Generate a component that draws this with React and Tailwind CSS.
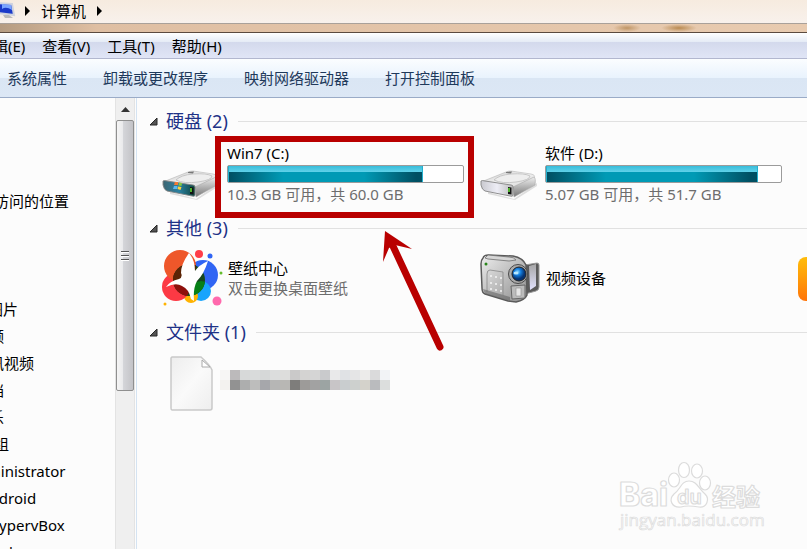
import React from 'react';

const MENUS = ['编辑(E)', '查看(V)', '工具(T)', '帮助(H)'];
const COMMANDS = ['系统属性', '卸载或更改程序', '映射网络驱动器', '打开控制面板'];
const TREE = [
  { label: '图片', indent: '-ml-3' },
  { label: '视频', indent: '-ml-[26px]' },
  { label: '腾讯视频', indent: '-ml-[26px]' },
  { label: '文档', indent: '-ml-[26px]' },
  { label: '音乐', indent: '-ml-[26px]' },
  { label: '家庭组', indent: '-ml-9' },
  { label: 'Administrator', indent: '-ml-8' },
  { label: 'Android', indent: '-ml-5' },
  { label: 'HypervBox', indent: '-ml-3' },
  { label: 'Work', indent: '-ml-5' },
];
const MOSAIC = [
  ['#fafaf9', '#f7f6f5', '#bcbabb', '#d7d9d9', '#d9dbdb', '#d6d8d8', '#dcdddd', '#dddddc', '#cac9c9', '#d4d3d2', '#d5d5d5', '#c9cacc', '#e9e9ea', '#e0e2e5', '#e5e5e6', '#ecebea', '#dadadb', '#f2f3f6'],
  ['#f8f8f8', '#f3f2ef', '#929292', '#adaeae', '#bdbdbc', '#a6a7ab', '#b6b6b5', '#b8b7b4', '#7e7d7b', '#9d9b99', '#a2a2a2', '#9ca4a3', '#c8c5c7', '#c9cdcf', '#cdd0ce', '#d4d2cb', '#babbbe', '#dcdedd'],
].map((row) => row.slice(1));

function Triangle() {
  return (
    <svg width="9" height="9" viewBox="0 0 9 9" className="shrink-0" aria-hidden="true">
      <path d="M8 1V8H1Z" fill="#555" stroke="#262626" />
    </svg>
  );
}

function Drive({ system }) {
  const p = system ? 'sys' : 'data';
  return (
    <svg width="58" height="34" viewBox="0 0 58 34" aria-hidden="true">
      <defs>
        <linearGradient id={p + 'top'} x1="0" y1="0" x2="1" y2="1">
          <stop offset="0" stopColor="#c4c4c4" /><stop offset=".5" stopColor="#f3f3f3" /><stop offset="1" stopColor="#cfcfcf" />
        </linearGradient>
        <linearGradient id={p + 'side'} x1="0" y1="0" x2="0" y2="1">
          <stop offset="0" stopColor="#eee" /><stop offset="1" stopColor="#777" />
        </linearGradient>
        <linearGradient id={p + 'front'} x1="0" y1="0" x2="1" y2="0">
          <stop offset="0" stopColor={system ? '#3d6672' : '#c9c9cf'} /><stop offset=".5" stopColor={system ? '#2b80a0' : '#ededf5'} /><stop offset="1" stopColor={system ? '#0f4640' : '#bbb'} />
        </linearGradient>
      </defs>
      <path d="M8 25L34 32L57 16L57 19L35 33L8 27Z" fill="#999" opacity=".3" />
      <path d="M1 15L26 5Q28 4 31 4L51 7Q56 8 54 11L33 21Z" fill={`url(#${p}top)`} stroke="#b5b5b5" strokeWidth=".6" />
      <path d="M14 13Q19 8 31 7Q45 6 50 9Q50 13 36 15Q22 17 14 13Z" fill="#eee" stroke="#bdbdbd" strokeWidth=".8" />
      <path d="M26 5L32 4.500L31 6.500L26 6Z" fill="#777" />
      <path d="M33 20L54 10Q56 11 55 18L34 30Z" fill={`url(#${p}side)`} stroke="#aaa" strokeWidth=".6" />
      <path d="M1 14Q2 13 5 14L31 18Q33 18 33 20V28Q33 30 30 29L5 24Q2 23 1 18Z" fill={`url(#${p}front)`} stroke="#858585" strokeWidth=".9" />
      <path d="M28 20L31.500 20.500V27.500L28 27Z" fill="#111" />
      <path d="M29 21V25" stroke="#62e936" strokeWidth="1.500" />
      {system && (
        <g>
          <path d="M13 15L16 15V18L12 18Z" fill="#f47932" />
          <path d="M17 15.500L20 16L19.500 19L16.500 18.500Z" fill="#86c843" />
          <path d="M12 19L15.500 19L15 22L11 22Z" fill="#5ab7ef" />
          <path d="M16 19.500L19.500 20L18.500 23L15.500 22Z" fill="#ffd43b" />
        </g>
      )}
    </svg>
  );
}

function Bird() {
  return (
    <svg width="60" height="57" viewBox="0 0 60 57" className="overflow-visible" aria-hidden="true">
      <clipPath id="orangeDisc"><circle cx="19" cy="17" r="16" /></clipPath>
      <clipPath id="redDisc"><circle cx="15" cy="38" r="14" /></clipPath>
      <clipPath id="skyDisc"><circle cx="40" cy="42" r="10" /></clipPath>
      <circle cx="42" cy="26" r="15" fill="#3065f4" />
      <circle cx="40" cy="42" r="10" fill="#18a4fc" />
      <circle cx="30" cy="47" r="7" fill="#ffb300" />
      <circle cx="15" cy="38" r="14" fill="#fc3944" />
      <circle cx="19" cy="17" r="16" fill="#ee572a" />
      <circle cx="28" cy="31" r="16" fill="#17471f" />
      <circle cx="28" cy="31" r="16" fill="#8e100c" clipPath="url(#redDisc)" />
      <circle cx="28" cy="31" r="16" fill="#5b2405" clipPath="url(#orangeDisc)" />
      <circle cx="28" cy="31" r="16" fill="#078017" clipPath="url(#skyDisc)" />
      <path d="M28 4Q20 15 20 24Q22 28 18 30Q9 32 5 38Q15 33 21 37Q28 40 30 50L33 52Q32 39 36 32Q43 25 47 12Q38 16 34 22Q34 11 28 4Z" fill="#fff" />
      <circle cx="38" cy="5" r="4" fill="#ff3d48" />
      <circle cx="49" cy="7" r="2.500" fill="#3065f4" />
      <circle cx="60" cy="24" r="1.500" fill="#65bd2d" />
      <circle cx="56" cy="52" r="4.500" fill="#ff69ad" />
      <circle cx="4" cy="55" r="1.500" fill="#ffb300" />
    </svg>
  );
}

function Camera() {
  return (
    <svg width="60" height="52" viewBox="0 0 60 52" aria-hidden="true">
      <defs>
        <linearGradient id="cam" x1="0" y1="0" x2="1" y2="1">
          <stop stopColor="#ededed" /><stop offset=".55" stopColor="#b9b9b9" /><stop offset="1" stopColor="#8d8d8d" />
        </linearGradient>
        <linearGradient id="flap" x1="0" y1="0" x2="0" y2="1"><stop stopColor="#a5a5a5" /><stop offset="1" stopColor="#e3e3ff" /></linearGradient>
        <radialGradient id="lens" cx=".4" cy=".35"><stop stopColor="#8ad7ff" /><stop offset=".45" stopColor="#147fe0" /><stop offset="1" stopColor="#073270" /></radialGradient>
      </defs>
      <path d="M45 13L57 11Q59 11 59 13V35Q59 38 56 39L45 42Z" fill="#5a5a5a" stroke="#999" />
      <path d="M49 14L56 12V34L50 38Z" fill="url(#flap)" />
      <path d="M3 6Q4 3 8 3L33 4Q43 6 46 13L47 43Q45 48 36 50L28 49L5 42Q2 41 2 36L1 12Q1 8 3 6Z" fill="url(#cam)" stroke="#5a5a5a" strokeWidth="1.500" />
      <path d="M5 6L8 3L29 5Q34 5 36 8L29 9L8 7Z" fill="#d5d5d5" stroke="#6e6e6e" strokeWidth=".8" />
      <path d="M7 40V22Q7 18 10 18L23 20V43" fill="none" stroke="#888" strokeWidth=".8" />
      <path d="M3 37L30 45V49L5 42Z" fill="#666" opacity=".6" />
      <g fill="#f4f4f4">
        <circle cx="11" cy="24" r="1" /><circle cx="16" cy="25" r="1" /><circle cx="21" cy="26" r="1" />
        <circle cx="11" cy="31" r="1" /><circle cx="16" cy="32" r="1" /><circle cx="21" cy="33" r="1" />
        <circle cx="11" cy="37" r="1" /><circle cx="16" cy="38" r="1" /><circle cx="21" cy="39" r="1" />
      </g>
      <circle cx="6" cy="12" r="1.500" fill="#288519" />
      <path d="M31 34L45 33V46L32 47Z" fill="#bbb" stroke="#666" />
      <path d="M36 36H41V44H36Z" fill="#e6e6e6" stroke="#999" strokeWidth=".7" />
      <circle cx="38" cy="22" r="9.500" fill="#aaa" stroke="#4a4a4a" />
      <circle cx="39" cy="22" r="7" fill="url(#lens)" stroke="#222" />
      <ellipse cx="36" cy="21" rx="2.500" ry="1.500" fill="#b7e7ff" />
    </svg>
  );
}

function FileIcon() {
  return (
    <svg width="43" height="55" viewBox="0 0 43 55" aria-hidden="true">
      <defs><linearGradient id="paper" x1="0" y1="0" x2="1" y2="1"><stop stopColor="#ededed" /><stop offset=".5" stopColor="#fafafa" /><stop offset="1" stopColor="#eee" /></linearGradient></defs>
      <path d="M2 1H31Q40 9 42 14V52Q42 54 40 54H2Q1 54 1 52V2Z" fill="url(#paper)" stroke="#c9c9c9" strokeWidth="1.500" />
      <path d="M32 4V11H40Z" fill="#fff" stroke="#aaa" />
    </svg>
  );
}

function Group({ title, children }) {
  return (
    <section>
      <h2 className="flex h-6 items-center pl-3">
        <button className="flex items-center gap-2 text-lg leading-6 text-[#1e3287]"><Triangle />{title}</button>
        <span className="ml-2.5 h-px flex-1 bg-[#e1e1e1]" />
      </h2>
      {children}
    </section>
  );
}

function Disk({ name, detail, used, system, marked }) {
  return (
    <article className="relative flex w-[318px] shrink-0 pt-2.5">
      <div className="w-[65px] shrink-0 pt-6"><Drive system={system} /></div>
      <div className="w-[237px] shrink-0">
        <h3 className="h-[22px] leading-5">{name}</h3>
        <div role="meter" aria-label={name} aria-valuenow={used} aria-valuemin="0" aria-valuemax="100" className="h-[18px] overflow-hidden rounded-xs border border-[#9b9b9b] bg-white">
          <div className="flex h-full flex-col border-x border-[#24b0ce] bg-[#0097b2]" style={{ width: `${used}%` }}>
            <div className="h-1.5 bg-linear-to-b from-[#36bddb] to-[#60d2e9]" />
            <div className="flex-1 bg-[linear-gradient(90deg,#004f62_0%,#009ab5_28%,#009ab5_70%,#004f62_97%)]" />
          </div>
        </div>
        <p className="mt-px leading-5 whitespace-nowrap text-[#6d6d6d]">{detail}</p>
      </div>
      {marked && <div className="absolute top-[3px] left-[53px] h-[82px] w-[259px] border-6 border-[#b90000]" />}
    </article>
  );
}

function Watermark() {
  return (
    <svg className="pointer-events-none absolute right-10 bottom-3 z-10" width="152" height="76" viewBox="0 0 152 76" aria-label="Baidu 经验">
      <g fill="#fff" stroke="#dcdcdc" strokeWidth="1.200" strokeLinejoin="round">
        <text x="4" y="45" fontFamily="Inter, sans-serif" fontWeight="800" fontSize="32">Bai</text>
        <ellipse cx="59" cy="19" rx="5.500" ry="7" /><ellipse cx="69" cy="9" rx="5.500" ry="7.500" />
        <ellipse cx="82" cy="10" rx="5.500" ry="7" /><ellipse cx="90" cy="22" rx="5.500" ry="7" />
        <path d="M74 20C66 20 66 28 59 33C53 39 57 47 66 46C72 44 78 45 84 46C92 47 95 38 90 33C83 27 82 20 74 20Z" />
        <text x="62" y="43" fontFamily="Inter, sans-serif" fontWeight="600" fontSize="20">du</text>
        <text x="97" y="45" fontFamily="Noto Sans CJK SC, sans-serif" fontWeight="700" fontSize="24">经验</text>
        <text x="5" y="65" fontFamily="Open Sans, sans-serif" fontSize="17" strokeWidth=".7">jingyan.baidu.com</text>
      </g>
    </svg>
  );
}

export default function App() {
  return (
    <div className="relative flex h-screen flex-col overflow-hidden bg-[#fcfcfc] font-['Noto_Sans','Noto_Sans_CJK_SC',sans-serif] text-[15px] text-black">
      <header className="shrink-0">
        <div className="flex h-[23px] items-center bg-linear-to-b from-[#f6ebdf] to-[#f8f1ec] pb-0.5">
          <svg width="17" height="20" viewBox="0 0 17 20" aria-hidden="true">
            <path d="M-3 2L12 3L14 14L-2 12Z" fill="#1a39c9" stroke="#cfd3df" strokeWidth="2" />
            <path d="M2 3L11 4L12 9Q6 5 2 8Z" fill="#7ca6ff" /><path d="M3 14L9 14L13 17L5 17Z" fill="#bbb" />
          </svg>
          <svg className="ml-2" width="5" height="10" viewBox="0 0 5 10" aria-hidden="true"><path d="M0 0L5 5L0 10Z" /></svg>
          <button className="ml-[11px] leading-5">计算机</button>
          <svg className="ml-[11px]" width="5" height="10" viewBox="0 0 5 10" aria-hidden="true"><path d="M0 0L5 5L0 10Z" /></svg>
        </div>
        <div className="flex h-2.5 border-t border-b border-t-[#a9a19a] border-b-[#5b4a3f] bg-linear-to-r from-[#b59c82] via-[#dfbfa3] via-12% to-[#e8cbb0]">
          <div className="ml-[76%] h-full w-7 bg-radial from-[#bf9565] to-transparent to-70%" />
          <div className="ml-5 h-full w-9 bg-radial from-[#b98a51] to-transparent to-70%" />
        </div>
        <nav aria-label="菜单" className="flex h-[26px] items-center gap-[17px] border-b border-[#b2b7cf] bg-[linear-gradient(#ffffff_0%,#e6ecf6_34%,#d3d9ec_36%,#e0e5f6_100%)]">
          {MENUS.map((m, i) => <button key={m} className={i === 0 ? '-ml-[22px] leading-5' : 'leading-5'}>{m}</button>)}
        </nav>
        <nav aria-label="命令" className="flex h-[39px] items-center gap-9 border-b border-[#9aabc7] bg-[linear-gradient(#fbfdff_0%,#e9f3fd_49%,#dae6f4_50%,#dce7f5_100%)] pl-[7px] text-[#1e395b]">
          {COMMANDS.map((c) => <button key={c} className="leading-5">{c}</button>)}
        </nav>
      </header>
      <div className="flex min-h-0 flex-1">
        <aside className="flex w-[137px] shrink-0 border-r border-[#d4e3f2]">
          <ul className="flex-1 overflow-hidden pt-[90px] whitespace-nowrap">
            <li className="mb-[81px] -ml-9 h-[27px] leading-[27px]">最近访问的位置</li>
            {TREE.map((t) => <li key={t.label} className={`${t.indent} h-[27px] leading-[27px]`}>{t.label}</li>)}
          </ul>
          <div className="mr-px w-5 border-x border-[#e3e3e3] bg-[#efefef]">
            <button aria-label="向上滚动" className="flex h-[22px] w-full items-center justify-center">
              <svg width="9" height="5" viewBox="0 0 9 5" aria-hidden="true"><path d="M0 5L4.500 0L9 5Z" fill="#333" /></svg>
            </button>
            <div className="flex h-[271px] flex-col items-center justify-center gap-0.5 rounded-xs border border-[#8f8f8f] bg-[linear-gradient(90deg,#f5f5f5_0%,#e9e9eb_38%,#d4d5d9_40%,#c3c3c7_100%)]">
              <span className="h-0.5 w-2 border-b border-white bg-[#555]" /><span className="h-0.5 w-2 border-b border-white bg-[#555]" /><span className="h-0.5 w-2 border-b border-white bg-[#555]" />
            </div>
          </div>
        </aside>
        <main className="relative min-w-0 flex-1 overflow-hidden pt-[11px]">
          <Group title="硬盘 (2)">
            <div className="flex h-[83px] pl-[25px]">
              <Disk name="Win7 (C:)" detail="10.3 GB 可用，共 60.0 GB" used={83} system marked />
              <Disk name="软件 (D:)" detail="5.07 GB 可用，共 51.7 GB" used={90} />
            </div>
          </Group>
          <Group title="其他 (3)">
            <div className="flex h-20 pl-6">
              <article className="flex w-[318px] shrink-0 pt-[9px]">
                <div className="w-[67px]"><Bird /></div>
                <div className="pt-[9px]"><h3 className="leading-5">壁纸中心</h3><p className="leading-5 text-[#6d6d6d]">双击更换桌面壁纸</p></div>
              </article>
              <article className="flex w-[318px] shrink-0 gap-1.5 pt-3 pl-px">
                <Camera /><h3 className="pt-4 leading-5">视频设备</h3>
              </article>
              <div className="mt-[17px] ml-px h-11 w-12 shrink-0 rounded-lg bg-linear-to-b from-[#ffbd0a] to-[#ff7408]" />
            </div>
          </Group>
          <Group title="文件夹 (1)">
            <div className="flex pt-3 pl-[33px]">
              <FileIcon />
              <div className="pt-3.5 pl-[7px]" aria-hidden="true">
                {MOSAIC.map((row, r) => (
                  <div key={r} className="flex">{row.map((c, i) => <span key={i} className="h-2.5 w-2.5" style={{ backgroundColor: c }} />)}</div>
                ))}
              </div>
            </div>
          </Group>
          <svg className="pointer-events-none absolute top-[131px] left-[243px]" width="68" height="124" viewBox="0 0 68 124" aria-hidden="true">
            <path d="M12 15L60 118" stroke="#b90000" strokeWidth="7" strokeLinecap="round" />
            <path d="M5 2L32 20L15 16L9 19L3 33Z" fill="#b90000" />
          </svg>
        </main>
      </div>
      <Watermark />
    </div>
  );
}
